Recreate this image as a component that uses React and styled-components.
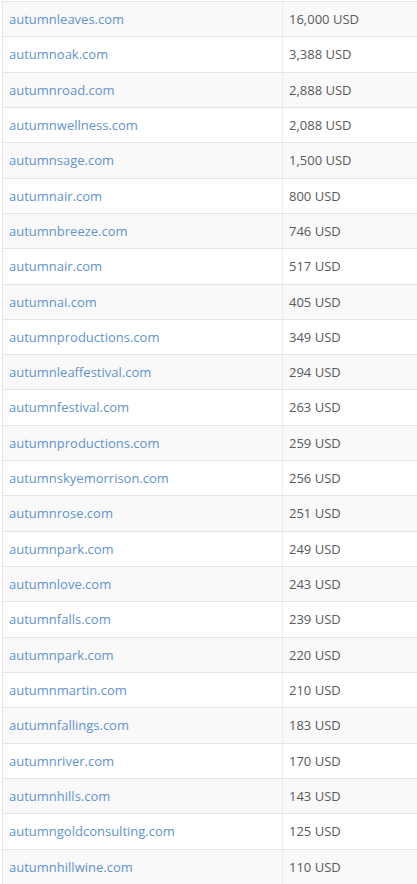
import React from 'react';
import styled, { createGlobalStyle } from 'styled-components';

const rows = [
  ['autumnleaves.com', '16,000 USD'],
  ['autumnoak.com', '3,388 USD'],
  ['autumnroad.com', '2,888 USD'],
  ['autumnwellness.com', '2,088 USD'],
  ['autumnsage.com', '1,500 USD'],
  ['autumnair.com', '800 USD'],
  ['autumnbreeze.com', '746 USD'],
  ['autumnair.com', '517 USD'],
  ['autumnai.com', '405 USD'],
  ['autumnproductions.com', '349 USD'],
  ['autumnleaffestival.com', '294 USD'],
  ['autumnfestival.com', '263 USD'],
  ['autumnproductions.com', '259 USD'],
  ['autumnskyemorrison.com', '256 USD'],
  ['autumnrose.com', '251 USD'],
  ['autumnpark.com', '249 USD'],
  ['autumnlove.com', '243 USD'],
  ['autumnfalls.com', '239 USD'],
  ['autumnpark.com', '220 USD'],
  ['autumnmartin.com', '210 USD'],
  ['autumnfallings.com', '183 USD'],
  ['autumnriver.com', '170 USD'],
  ['autumnhills.com', '143 USD'],
  ['autumngoldconsulting.com', '125 USD'],
  ['autumnhillwine.com', '110 USD'],
];

const GlobalStyle = createGlobalStyle`
  body {
    margin: 0;
    background: #fff;
    font-family: "Open Sans", "Liberation Sans", sans-serif;
  }
`;

const Table = styled.table`
  width: calc(100% - 2px);
  margin: 1px 0 0 2px;
  border-collapse: collapse;
  border-left: 1px solid #e6e6e6;
  font-size: 13px;
`;

const Row = styled.tr`
  background: ${(p) => (p.$striped ? '#f9f9f9' : '#fff')};
`;

const Cell = styled.td`
  padding: 8px 6px;
  line-height: 18.32px;
  border-top: 1px solid #e4e4e4;
  color: #5a5a5a;
  white-space: nowrap;
  width: ${(p) => p.$width || 'auto'};
  border-right: ${(p) => (p.$divider ? '1px solid #ebebeb' : 'none')};
`;

const DomainLink = styled.a`
  color: #6194cb;
  text-decoration: none;
`;

export default function App() {
  return (
    <>
      <GlobalStyle />
      <Table>
        <tbody>
          {rows.map(([domain, price], i) => (
            <Row key={i} $striped={i % 2 === 0}>
              <Cell $width="267px" $divider>
                <DomainLink href="#">{domain}</DomainLink>
              </Cell>
              <Cell>{price}</Cell>
            </Row>
          ))}
        </tbody>
      </Table>
    </>
  );
}
